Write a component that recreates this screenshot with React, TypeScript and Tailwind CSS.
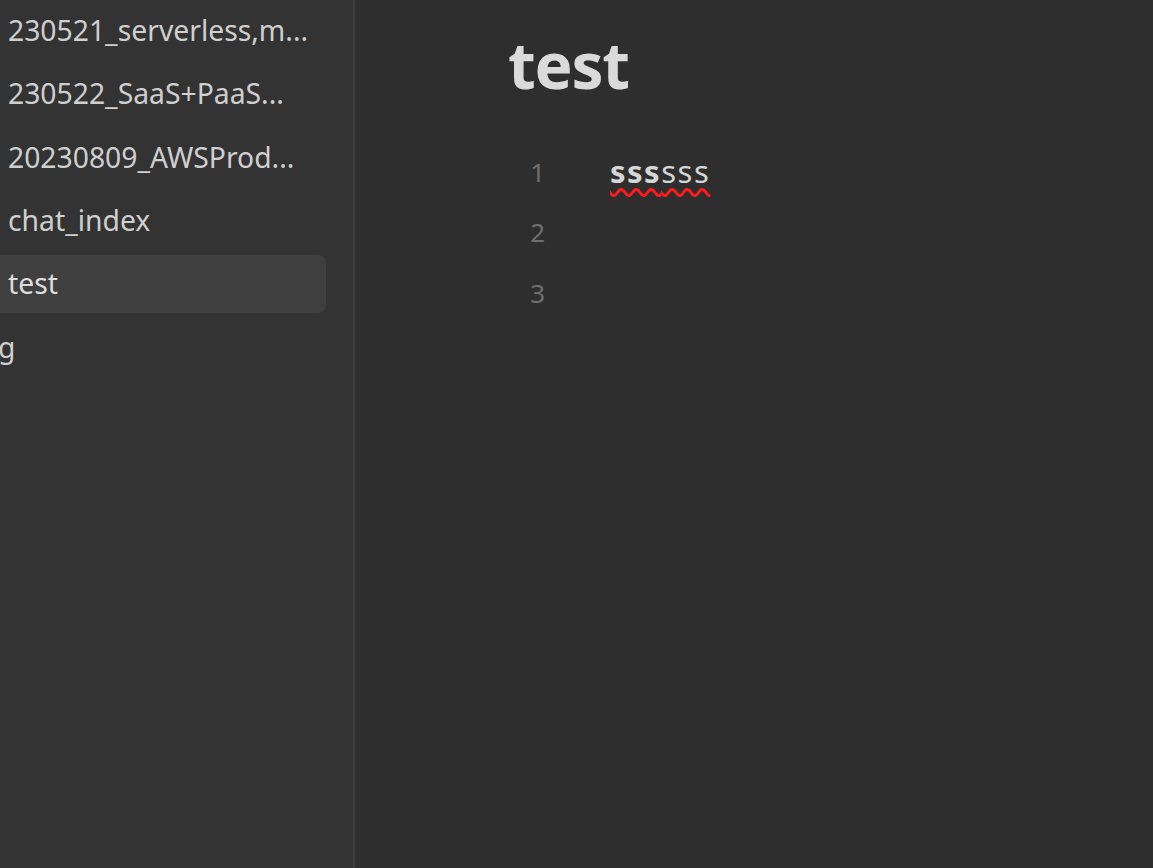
import React from "react";

const font = { fontFamily: '"Noto Sans", "Open Sans", sans-serif' };

function NavItem({ label, active }: { label: string; active?: boolean }) {
  return (
    <div
      className={
        "h-[58px] flex items-center pl-[20px] pr-4 rounded-r-lg whitespace-nowrap " +
        (active ? "bg-[#3f3f3f] text-[#dcdcdc] w-[338px]" : "text-[#cfcfcf]")
      }
    >
      {label}
    </div>
  );
}

export default function App() {
  return (
    <div className="w-[1153px] h-[868px] flex overflow-hidden bg-[#2e2e2e]" style={font}>
      <aside className="w-[355px] shrink-0 h-full bg-[#333333] border-r-2 border-[#3d3d3d] overflow-hidden">
        <div className="-ml-[12px] pt-[1px] flex flex-col gap-[5.4px] text-[28.3px] leading-none">
          <NavItem label="230521_serverless,m..." />
          <NavItem label="230522_SaaS+PaaS..." />
          <NavItem label="20230809_AWSProd..." />
          <NavItem label="chat_index" />
          <NavItem label="test" active />
          <div className="h-[58px] flex items-center text-[#cfcfcf] whitespace-nowrap">
            <span className="ml-[10px]">g</span>
          </div>
        </div>
      </aside>
      <main className="flex-1 h-full">
        <div className="pl-[153px] pt-[27px]">
          <h1 className="text-[64px] leading-[1.2] font-bold text-[#dadada] tracking-[-0.02em]">test</h1>
          <div className="mt-[38px] flex leading-[60.5px]">
            <div className="w-[37px] text-right text-[#6e6e6e] text-[26px]">
              <div>1</div>
              <div>2</div>
              <div>3</div>
            </div>
            <div className="ml-[65px] text-[#d6d6d6] text-[31px] -mt-[1px]">
              <div>
                <span className="tracking-[1.5px] underline decoration-wavy decoration-[#ff1a1a] decoration-[2.5px] underline-offset-[5px]">
                  <span className="font-bold">sss</span>sss
                </span>
              </div>
              <div>&nbsp;</div>
              <div>&nbsp;</div>
            </div>
          </div>
        </div>
      </main>
    </div>
  );
}
